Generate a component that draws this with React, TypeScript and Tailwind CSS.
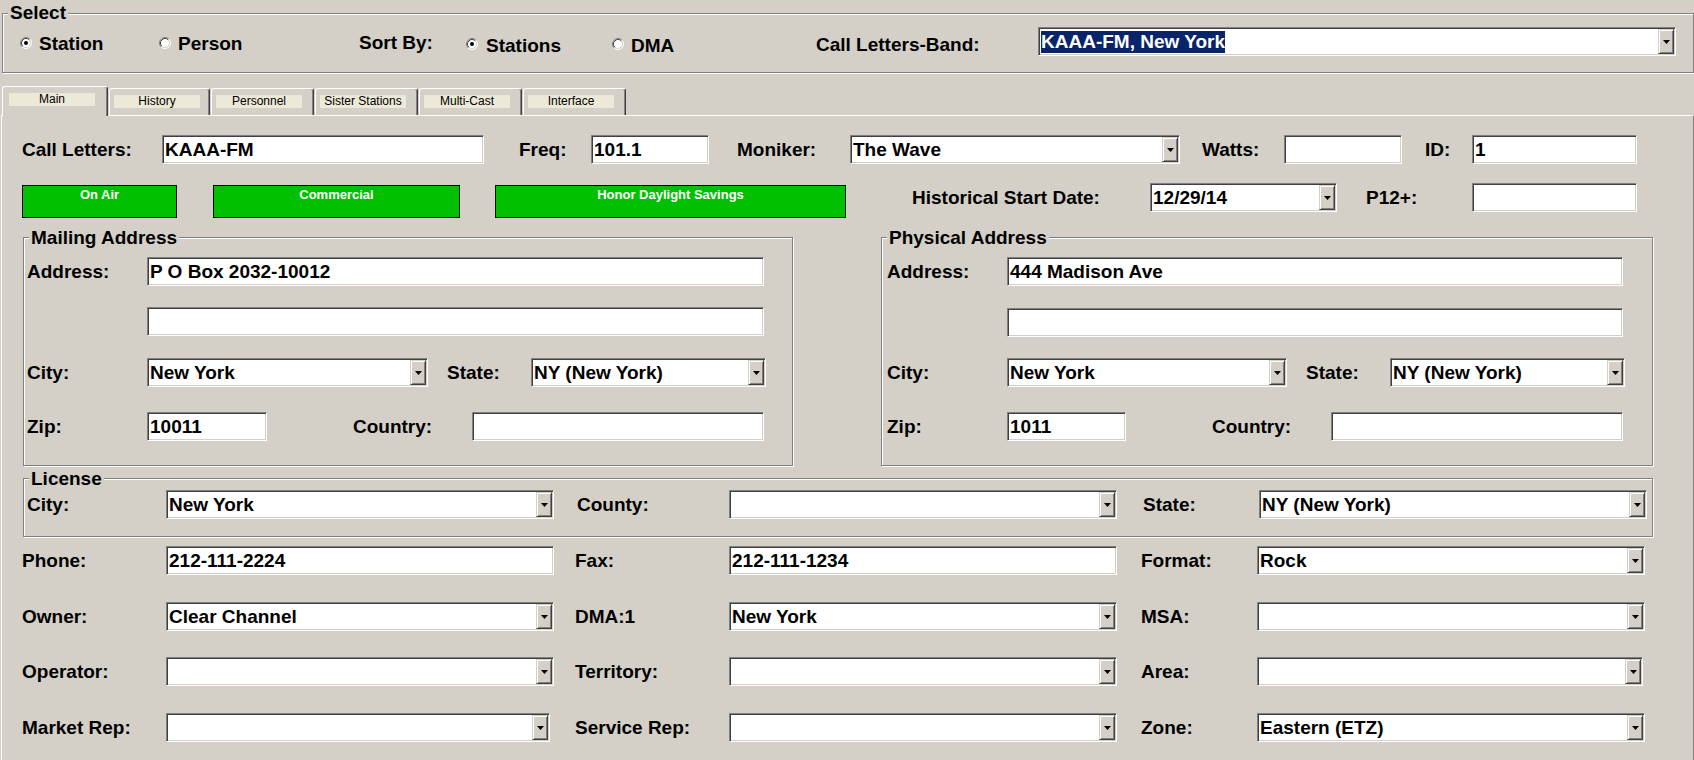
import React from 'react';

const sunken =
  'border border-t-[#808080] border-l-[#808080] border-r-white border-b-white shadow-[inset_1px_1px_0_#404040,inset_-1px_-1px_0_#d4d0c8]';
const etched = 'border border-[#808080] shadow-[inset_1px_1px_0_#fff,1px_1px_0_#fff]';

function Label({ className = '', children }: { className?: string; children?: React.ReactNode }) {
  return (
    <div className={`shrink-0 text-[19px] font-bold leading-[22px] whitespace-nowrap ${className}`}>
      {children}
    </div>
  );
}

function TextBox({ className = '', value = '' }: { className?: string; value?: string }) {
  return (
    <div
      className={`shrink-0 h-[29px] bg-white ${sunken} flex items-center pl-[2px] text-[19px] font-bold leading-[22px] whitespace-nowrap overflow-hidden ${className}`}
    >
      {value}
    </div>
  );
}

function DropArrow() {
  return (
    <svg width="7" height="4" viewBox="0 0 7 4">
      <path d="M0 0H7L3.5 4Z" fill="#000" />
    </svg>
  );
}

function ComboBox({
  className = '',
  value = '',
  selected = false,
}: {
  className?: string;
  value?: string;
  selected?: boolean;
}) {
  return (
    <div className={`shrink-0 h-[29px] bg-white ${sunken} flex p-px ${className}`}>
      <div className="flex-1 flex items-center pl-px text-[19px] font-bold leading-[22px] overflow-hidden whitespace-nowrap">
        {selected ? <span className="bg-[#0a246a] text-white">{value}</span> : value}
      </div>
      <div className="w-[16px] shrink-0 bg-[#d4d0c8] border border-t-[#d4d0c8] border-l-[#d4d0c8] border-r-[#404040] border-b-[#404040] shadow-[inset_1px_1px_0_#fff,inset_-1px_-1px_0_#808080] flex items-center justify-center">
        <DropArrow />
      </div>
    </div>
  );
}

function Radio({ checked = false, className = '' }: { checked?: boolean; className?: string }) {
  return (
    <svg className={`shrink-0 ${className}`} width="12" height="12" viewBox="0 0 12 12">
      <circle cx="6" cy="6" r="5" fill="#fff" />
      <path d="M2.11 9.89A5.5 5.5 0 0 1 9.89 2.11" fill="none" stroke="#808080" />
      <path d="M9.89 2.11A5.5 5.5 0 0 1 2.11 9.89" fill="none" stroke="#fff" />
      <path d="M2.82 9.18A4.5 4.5 0 0 1 9.18 2.82" fill="none" stroke="#404040" />
      <path d="M9.18 2.82A4.5 4.5 0 0 1 2.82 9.18" fill="none" stroke="#d4d0c8" />
      {checked && <circle cx="6" cy="6" r="2" fill="#000" />}
    </svg>
  );
}

function GreenButton({ className = '', children }: { className?: string; children?: React.ReactNode }) {
  return (
    <div
      className={`shrink-0 h-[33px] bg-[#00c000] border border-black text-white text-[13px] font-bold leading-[15px] pt-px text-center ${className}`}
    >
      {children}
    </div>
  );
}

function Group({
  title,
  className = '',
  titleTop = 'top-[-11px]',
  children,
}: {
  title: string;
  className?: string;
  titleTop?: string;
  children?: React.ReactNode;
}) {
  return (
    <div className={`relative shrink-0 ${etched} ${className}`}>
      <span className={`absolute left-[5px] ${titleTop} bg-[#d4d0c8] px-[2px] text-[19px] font-bold leading-[22px] whitespace-nowrap`}>
        {title}
      </span>
      {children}
    </div>
  );
}

function Tab({ label, active = false, className = '' }: { label: string; active?: boolean; className?: string }) {
  return (
    <div
      className={`shrink-0 bg-[#d4d0c8] border-l border-t border-r border-t-white border-l-white border-r-[#404040] shadow-[inset_-1px_0_0_#808080] rounded-t-[3px] ${
        active ? 'relative z-10 h-[30px] -mb-px' : 'h-[27px]'
      } ${className}`}
    >
      <div
        className={`w-[86px] h-[13px] mt-[6px] bg-[#ece9d8] text-[12px] leading-[13px] text-center text-black whitespace-nowrap ${
          active ? 'ml-[6px]' : 'ml-[4px]'
        }`}
      >
        {label}
      </div>
    </div>
  );
}

export default function App() {
  return (
    <div className="w-[1694px] h-[760px] overflow-hidden bg-[#d4d0c8] text-black font-['Liberation_Sans',Arial,sans-serif] flex flex-col">
      {/* Select */}
      <Group title="Select" titleTop="top-[-12px]" className="mt-[13px] ml-[2px] w-[1692px] h-[60px]">
        <div className="flex items-start">
          <Radio checked className="ml-[17px] mt-[23px]" />
          <Label className="ml-[7px] mt-[19px] w-[120px]">Station</Label>
          <Radio className="mt-[23px]" />
          <Label className="ml-[7px] mt-[19px] w-[181px]">Person</Label>
          <Label className="mt-[18px] w-[107px]">Sort By:</Label>
          <Radio checked className="mt-[24px]" />
          <Label className="ml-[8px] mt-[21px] w-[126px]">Stations</Label>
          <Radio className="mt-[24px]" />
          <Label className="ml-[7px] mt-[21px] w-[185px]">DMA</Label>
          <Label className="mt-[20px] w-[222px]">Call Letters-Band:</Label>
          <ComboBox className="mt-[13px] w-[638px]" value="KAAA-FM, New York" selected />
        </div>
      </Group>

      {/* Tabs */}
      <div className="flex items-end h-[29px] mt-[13px] shrink-0">
        <Tab label="Main" active className="ml-[2px] w-[106px]" />
        <Tab label="History" className="ml-px w-[101px]" />
        <Tab label="Personnel" className="ml-px w-[103px]" />
        <Tab label="Sister Stations" className="ml-px w-[103px]" />
        <Tab label="Multi-Cast" className="ml-px w-[103px]" />
        <Tab label="Interface" className="ml-px w-[103px]" />
      </div>

      {/* Panel */}
      <div className="ml-px w-[1693px] h-[660px] shrink-0 border-l border-t border-r border-l-white border-t-white border-r-[#808080] flex flex-col">
        {/* Row 1 */}
        <div className="flex items-center mt-[19px] h-[29px]">
          <Label className="ml-[20px] w-[140px]">Call Letters:</Label>
          <TextBox className="w-[322px]" value="KAAA-FM" />
          <Label className="ml-[35px] w-[72px]">Freq:</Label>
          <TextBox className="w-[118px]" value="101.1" />
          <Label className="ml-[28px] w-[113px]">Moniker:</Label>
          <ComboBox className="w-[330px]" value="The Wave" />
          <Label className="ml-[22px] w-[82px]">Watts:</Label>
          <TextBox className="w-[118px]" />
          <Label className="ml-[23px] w-[47px]">ID:</Label>
          <TextBox className="w-[165px]" value="1" />
        </div>

        {/* Row 2 */}
        <div className="flex items-start mt-[19px] h-[35px]">
          <GreenButton className="ml-[20px] mt-[2px] w-[155px]">On Air</GreenButton>
          <GreenButton className="ml-[36px] mt-[2px] w-[247px]">Commercial</GreenButton>
          <GreenButton className="ml-[35px] mt-[2px] w-[351px]">Honor Daylight Savings</GreenButton>
          <Label className="ml-[66px] w-[238px] h-[29px] flex items-center">Historical Start Date:</Label>
          <ComboBox className="w-[187px]" value="12/29/14" />
          <Label className="ml-[29px] w-[106px] h-[29px] flex items-center">P12+:</Label>
          <TextBox className="w-[165px]" />
        </div>

        {/* Addresses */}
        <div className="flex mt-[19px]">
          <Group title="Mailing Address" className="ml-[21px] w-[770px] h-[229px]">
            <div className="flex items-center mt-[19px] h-[29px]">
              <Label className="ml-[3px] w-[120px]">Address:</Label>
              <TextBox className="w-[617px]" value="P O Box 2032-10012" />
            </div>
            <div className="flex items-center mt-[21px] h-[29px]">
              <TextBox className="ml-[123px] w-[617px]" />
            </div>
            <div className="flex items-center mt-[22px] h-[29px]">
              <Label className="ml-[3px] w-[120px]">City:</Label>
              <ComboBox className="w-[281px]" value="New York" />
              <Label className="ml-[19px] w-[84px]">State:</Label>
              <ComboBox className="w-[235px]" value="NY (New York)" />
            </div>
            <div className="flex items-center mt-[25px] h-[29px]">
              <Label className="ml-[3px] w-[120px]">Zip:</Label>
              <TextBox className="w-[120px]" value="10011" />
              <Label className="ml-[86px] w-[119px]">Country:</Label>
              <TextBox className="w-[292px]" />
            </div>
          </Group>

          <Group title="Physical Address" className="ml-[88px] w-[772px] h-[229px]">
            <div className="flex items-center mt-[19px] h-[29px]">
              <Label className="ml-[5px] w-[120px]">Address:</Label>
              <TextBox className="w-[616px]" value="444 Madison Ave" />
            </div>
            <div className="flex items-center mt-[22px] h-[29px]">
              <TextBox className="ml-[125px] w-[616px]" />
            </div>
            <div className="flex items-center mt-[21px] h-[29px]">
              <Label className="ml-[5px] w-[120px]">City:</Label>
              <ComboBox className="w-[280px]" value="New York" />
              <Label className="ml-[19px] w-[84px]">State:</Label>
              <ComboBox className="w-[235px]" value="NY (New York)" />
            </div>
            <div className="flex items-center mt-[25px] h-[29px]">
              <Label className="ml-[5px] w-[120px]">Zip:</Label>
              <TextBox className="w-[119px]" value="1011" />
              <Label className="ml-[86px] w-[119px]">Country:</Label>
              <TextBox className="w-[292px]" />
            </div>
          </Group>
        </div>

        {/* License */}
        <Group title="License" className="ml-[21px] mt-[12px] w-[1630px] h-[59px]">
          <div className="flex items-center mt-[11px] h-[29px]">
            <Label className="ml-[3px] w-[139px]">City:</Label>
            <ComboBox className="w-[388px]" value="New York" />
            <Label className="ml-[23px] w-[152px]">County:</Label>
            <ComboBox className="w-[388px]" />
            <Label className="ml-[26px] w-[116px]">State:</Label>
            <ComboBox className="w-[388px]" value="NY (New York)" />
          </div>
        </Group>

        {/* Phone */}
        <div className="flex items-center mt-[9px] h-[29px]">
          <Label className="ml-[20px] w-[144px]">Phone:</Label>
          <TextBox className="w-[388px]" value="212-111-2224" />
          <Label className="ml-[21px] w-[154px]">Fax:</Label>
          <TextBox className="w-[388px]" value="212-111-1234" />
          <Label className="ml-[24px] w-[116px]">Format:</Label>
          <ComboBox className="w-[388px]" value="Rock" />
        </div>

        {/* Owner */}
        <div className="flex items-center mt-[27px] h-[29px]">
          <Label className="ml-[20px] w-[144px]">Owner:</Label>
          <ComboBox className="w-[388px]" value="Clear Channel" />
          <Label className="ml-[21px] w-[154px]">DMA:1</Label>
          <ComboBox className="w-[388px]" value="New York" />
          <Label className="ml-[24px] w-[116px]">MSA:</Label>
          <ComboBox className="w-[388px]" />
        </div>

        {/* Operator */}
        <div className="flex items-center mt-[26px] h-[29px]">
          <Label className="ml-[20px] w-[144px]">Operator:</Label>
          <ComboBox className="w-[388px]" />
          <Label className="ml-[21px] w-[154px]">Territory:</Label>
          <ComboBox className="w-[388px]" />
          <Label className="ml-[24px] w-[116px]">Area:</Label>
          <ComboBox className="w-[386px]" />
        </div>

        {/* Market Rep */}
        <div className="flex items-center mt-[27px] h-[29px]">
          <Label className="ml-[20px] w-[144px]">Market Rep:</Label>
          <ComboBox className="w-[384px]" />
          <Label className="ml-[25px] w-[154px]">Service Rep:</Label>
          <ComboBox className="w-[388px]" />
          <Label className="ml-[24px] w-[116px]">Zone:</Label>
          <ComboBox className="w-[388px]" value="Eastern (ETZ)" />
        </div>
      </div>
    </div>
  );
}
